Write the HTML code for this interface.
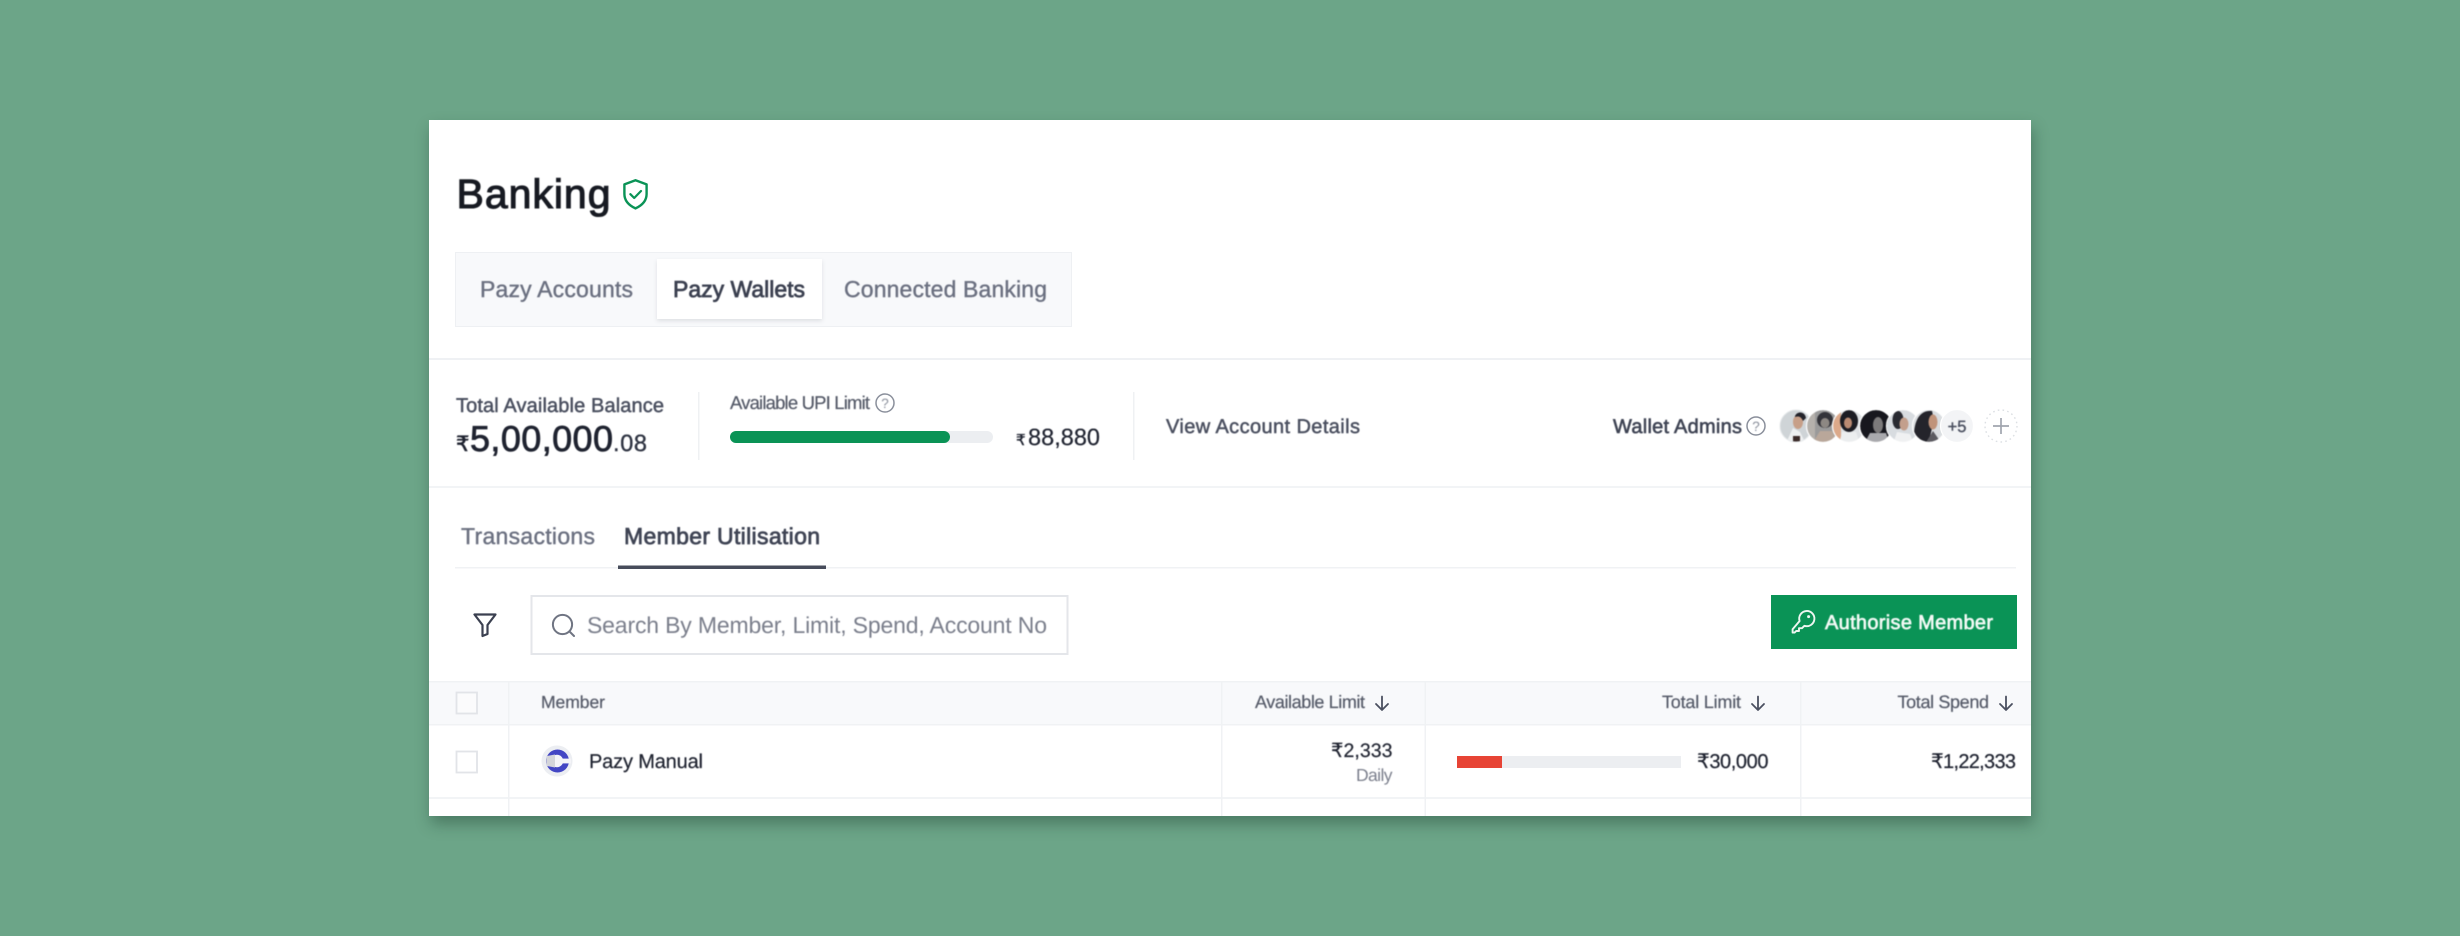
<!DOCTYPE html>
<html lang="en">
<head>
<meta charset="utf-8">
<title>Banking</title>
<style>
html,body{margin:0;padding:0;width:2460px;height:936px;overflow:hidden;background:#6ca588}
.card{position:absolute;left:429px;top:120px;width:1602px;height:696px;background:#fff;box-shadow:2px 8px 14px rgba(20,50,35,.36)}
svg.o{position:absolute;left:0;top:0;display:block}
text{font-family:"Liberation Sans","DejaVu Sans",sans-serif;text-rendering:geometricPrecision}
.m{stroke-width:.4px}
.l{stroke-width:.22px}
.txt{filter:blur(.4px)}
.av{filter:blur(.6px)}
</style>
</head>
<body>
<div class="card"></div>
<svg class="o" width="2460" height="936" viewBox="0 0 2460 936" xmlns="http://www.w3.org/2000/svg">
  <defs>
    <clipPath id="a1"><circle cx="1796" cy="426" r="16"/></clipPath>
    <clipPath id="a2"><circle cx="1823" cy="426" r="16"/></clipPath>
    <clipPath id="a3"><circle cx="1849" cy="426" r="16"/></clipPath>
    <clipPath id="a4"><circle cx="1876" cy="426" r="16"/></clipPath>
    <clipPath id="a5"><circle cx="1903" cy="426" r="16"/></clipPath>
    <clipPath id="a6"><circle cx="1929" cy="426" r="16"/></clipPath>
  </defs>

  <!-- page tabs -->
  <rect x="455.5" y="252.5" width="616" height="74" fill="#f8f9fb" stroke="#eef0f3"/>
  <rect x="657" y="259" width="165" height="60" fill="#fff" style="filter:drop-shadow(0 2px 2px rgba(30,40,60,.12))"/>

  <!-- section lines -->
  <rect x="429" y="358" width="1602" height="2" fill="#eff1f4"/>
  <rect x="429" y="486" width="1602" height="2" fill="#f2f4f6"/>
  <rect x="698" y="392" width="1.5" height="68" fill="#eff1f3"/>
  <rect x="1133" y="392" width="1.5" height="68" fill="#eff1f3"/>

  <!-- UPI bar -->
  <rect x="730" y="431" width="263" height="12" rx="6" fill="#eceef1"/>
  <rect x="730" y="431" width="220" height="12" rx="6" fill="#0a9356"/>

  <!-- sub tabs -->
  <rect x="455" y="567" width="1561" height="1.5" fill="#f0f2f4"/>
  <rect x="618" y="565.5" width="208" height="3.5" fill="#474c5b"/>

  <!-- search -->
  <rect x="531.5" y="596" width="536" height="58" fill="#fff" stroke="#e4e6ea" stroke-width="2"/>
  <circle cx="562.5" cy="624.5" r="9.6" fill="none" stroke="#6f7482" stroke-width="2"/>
  <path d="M569.5 631.5L574 636" fill="none" stroke="#6f7482" stroke-width="2" stroke-linecap="round"/>

  <!-- filter -->
  <path d="M474.5 614.5H495.5L487.5 625V634L482.5 636V625Z" fill="none" stroke="#3b4050" stroke-width="2.2" stroke-linejoin="round"/>

  <!-- button -->
  <rect x="1771" y="595" width="246" height="54" fill="#0a9356"/>
  <path d="M1799.6 621A7.6 7.6 0 1 1 1804.4 625.8L1802 628.2H1799V631H1796.2L1794.6 632.6H1792.6V629.2Z" fill="none" stroke="#eef6f1" stroke-width="1.9" stroke-linejoin="round"/>
  <circle cx="1808.6" cy="616.6" r="1.5" fill="#eef6f1"/>

  <!-- table -->
  <rect x="429" y="682" width="1602" height="43" fill="#f8f9fb"/>
  <rect x="429" y="681" width="1602" height="1.5" fill="#f0f2f4"/>
  <rect x="429" y="724" width="1602" height="1.5" fill="#f0f2f4"/>
  <rect x="429" y="797" width="1602" height="2" fill="#f2f4f6"/>
  <g fill="#f0f2f4">
    <rect x="508" y="682" width="1.5" height="134"/>
    <rect x="1221" y="682" width="1.5" height="134"/>
    <rect x="1424.5" y="682" width="1.5" height="134"/>
    <rect x="1800" y="682" width="1.5" height="134"/>
  </g>
  <rect x="456.5" y="692.5" width="20.5" height="21" fill="#fff" fill-opacity=".4" stroke="#e2e4e8" stroke-width="1.8"/>
  <rect x="456.5" y="751.5" width="20.5" height="21" fill="#fff" stroke="#e2e4e8" stroke-width="1.8"/>

  <!-- sort arrows -->
  <g fill="none" stroke="#4b5060" stroke-width="1.8" stroke-linecap="round" stroke-linejoin="round">
    <path d="M1382 696.5V710M1376 704L1382 710L1388 704"/>
    <path d="M1758 696.5V710M1752 704L1758 710L1764 704"/>
    <path d="M2006 696.5V710M2000 704L2006 710L2012 704"/>
  </g>

  <!-- limit bar -->
  <rect x="1457" y="756" width="224" height="12" fill="#eceef1"/>
  <rect x="1457" y="756" width="45" height="12" fill="#e74435"/>

  <!-- shield -->
  <path d="M635.5 180.2L646.6 184.4V194C646.6 200.8 642 205.4 635.5 208.4C629 205.4 624.4 200.8 624.4 194V184.4Z" fill="none" stroke="#0a9356" stroke-width="2.4" stroke-linejoin="round"/>
  <path d="M630.4 194.2L634.2 198L641 191" fill="none" stroke="#0a9356" stroke-width="2.2" stroke-linecap="round" stroke-linejoin="round"/>

  <!-- help icons -->
  <circle cx="885" cy="403" r="9" fill="none" stroke="#8a8f9b" stroke-width="1.5"/>
  <circle cx="1756" cy="426" r="9" fill="none" stroke="#8a8f9b" stroke-width="1.5"/>

  <!-- logo -->
  <g style="filter:blur(.35px)">
    <circle cx="557" cy="761" r="15.5" fill="#eceef2"/>
    <circle cx="557.5" cy="761" r="11.5" fill="#4346c4"/>
    <circle cx="557" cy="761" r="6.2" fill="#f4f4f8"/>
    <rect x="560" y="758.6" width="11" height="4.8" fill="#f4f4f8"/>
    <path d="M547 756C546 759 546 763 547 766L555 767.5V754.5Z" fill="#d4d5da"/>
  </g>

  <!-- avatars -->
  <g class="av">
  <g clip-path="url(#a1)">
    <rect x="1778" y="408" width="36" height="36" fill="#cfd4d7"/>
    <ellipse cx="1798" cy="422" rx="5" ry="7" fill="#c79f88"/>
    <path d="M1795 416C1797 411 1805 411 1806 418L1803 421C1801 416 1798 416 1795 417Z" fill="#23232b"/>
    <path d="M1786 443L1793 428L1800 432L1806 444Z" fill="#eef0f1"/>
    <rect x="1793" y="436" width="7" height="6" fill="#3a2a28"/>
  </g>
  <circle cx="1796" cy="426" r="16" fill="none" stroke="#e5e8ea" stroke-width="1"/>
  <g clip-path="url(#a2)">
    <rect x="1805" y="408" width="36" height="36" fill="#9a9a9a"/>
    <rect x="1805" y="408" width="10" height="36" fill="#b5b1ac"/>
    <ellipse cx="1825" cy="420" rx="8" ry="8" fill="#34343a"/>
    <ellipse cx="1825" cy="423" rx="4.5" ry="5" fill="#8d8883"/>
    <path d="M1812 444L1820 431L1832 431L1838 444Z" fill="#b9a79a"/>
  </g>
  <circle cx="1823" cy="426" r="16.5" fill="none" stroke="#fff" stroke-width="1.2"/>
  <g clip-path="url(#a3)">
    <rect x="1831" y="408" width="36" height="36" fill="#dfe2e5"/>
    <rect x="1831" y="408" width="10" height="36" fill="#dca98a"/>
    <ellipse cx="1849" cy="421" rx="9" ry="11" fill="#1d1d24"/>
    <ellipse cx="1848" cy="423" rx="4" ry="5.5" fill="#b98a72"/>
    <path d="M1839 444L1842 432L1856 432L1860 444Z" fill="#eceeef"/>
  </g>
  <circle cx="1849" cy="426" r="16.5" fill="none" stroke="#fff" stroke-width="1.2"/>
  <g clip-path="url(#a4)">
    <rect x="1858" y="408" width="36" height="36" fill="#17171e"/>
    <ellipse cx="1878" cy="425" rx="5" ry="8" fill="#7c7a7b"/>
    <path d="M1864 444L1870 433L1886 433L1890 444Z" fill="#a9a9ad"/>
  </g>
  <circle cx="1876" cy="426" r="16.5" fill="none" stroke="#fff" stroke-width="1.2"/>
  <g clip-path="url(#a5)">
    <rect x="1885" y="408" width="36" height="36" fill="#d8dce0"/>
    <ellipse cx="1898" cy="420" rx="5.5" ry="9" fill="#292a31"/>
    <ellipse cx="1904" cy="424" rx="4.5" ry="6.5" fill="#c39f8c"/>
    <path d="M1893 444L1897 432L1910 434L1914 444Z" fill="#f0f1f2"/>
  </g>
  <circle cx="1903" cy="426" r="16.5" fill="none" stroke="#fff" stroke-width="1.2"/>
  <g clip-path="url(#a6)">
    <rect x="1911" y="408" width="36" height="36" fill="#dadde0"/>
    <path d="M1914 442C1913 420 1920 410 1932 411C1935 422 1930 436 1928 444Z" fill="#24242b"/>
    <ellipse cx="1933" cy="422" rx="4.5" ry="7.5" fill="#c0937a"/>
    <path d="M1925 444L1933 431L1942 444Z" fill="#5b5a60"/>
  </g>
  <circle cx="1929" cy="426" r="16.5" fill="none" stroke="#fff" stroke-width="1.2"/>
  </g>

  <circle cx="1957" cy="426" r="16.5" fill="#f3f4f6" stroke="#fff" stroke-width="1.2"/>
  <circle cx="2001" cy="426" r="16" fill="#fff" stroke="#dcdfe3" stroke-width="1.4" stroke-dasharray="1.6 3.2"/>
  <path d="M2001 418V434M1993 426H2009" stroke="#a0a5ae" stroke-width="1.7" fill="none"/>

  <!-- all text -->
  <g class="txt">
    <text x="456.5" y="208" font-size="41" textLength="154" fill="#171a22" stroke="#171a22" style="stroke-width:1.1px">Banking</text>

    <text x="480" y="297" font-size="23" textLength="153" fill="#6b7080" stroke="#6b7080" class="m">Pazy Accounts</text>
    <text x="673" y="297" font-size="23" textLength="132" fill="#3b4050" stroke="#3b4050" style="stroke-width:.75px">Pazy Wallets</text>
    <text x="844" y="297" font-size="23" textLength="203" fill="#6b7080" stroke="#6b7080" class="m">Connected Banking</text>

    <text x="456" y="412" font-size="20" textLength="208" fill="#4b5060" stroke="#4b5060" class="m" style="stroke-width:.5px">Total Available Balance</text>
    <text x="456" y="451" font-size="21" textLength="12" fill="#1f2330" stroke="#1f2330" style="stroke-width:.6px">₹</text>
    <text x="470" y="451" font-size="36" textLength="143" fill="#1f2330" stroke="#1f2330" style="stroke-width:.8px">5,00,000</text>
    <text x="613" y="451" font-size="23.5" textLength="34" fill="#2f3442" stroke="#2f3442" class="m">.08</text>

    <text x="730" y="409" font-size="18.5" textLength="140" fill="#555a68" stroke="#555a68" class="l">Available UPI Limit</text>
    <text x="885" y="408" font-size="13.5" text-anchor="middle" fill="#8a8f9b">?</text>
    <text x="1016" y="445" font-size="15" textLength="9" fill="#1f2330" stroke="#1f2330" class="m">₹</text>
    <text x="1028" y="445" font-size="23.5" textLength="72" fill="#1f2330" stroke="#1f2330" class="l">88,880</text>

    <text x="1166" y="433" font-size="20" textLength="194" fill="#4b5060" stroke="#4b5060" class="m" style="stroke-width:.5px">View Account Details</text>

    <text x="1613" y="433" font-size="20" textLength="129" fill="#3f4454" stroke="#3f4454" class="m" style="stroke-width:.6px">Wallet Admins</text>
    <text x="1756" y="431" font-size="13.5" text-anchor="middle" fill="#8a8f9b">?</text>
    <text x="1957" y="432" font-size="16.5" text-anchor="middle" fill="#4b5060" stroke="#4b5060" class="m">+5</text>

    <text x="461" y="544" font-size="23" textLength="134" fill="#6b7080" stroke="#6b7080" class="m">Transactions</text>
    <text x="624" y="544" font-size="23" textLength="196" fill="#3f4454" stroke="#3f4454" style="stroke-width:.75px">Member Utilisation</text>

    <text x="587" y="633" font-size="23" textLength="460" fill="#7b7f8c">Search By Member, Limit, Spend, Account No</text>

    <text x="1825" y="629" font-size="20" textLength="168" fill="#f4faf6" stroke="#f4faf6" style="stroke-width:.65px">Authorise Member</text>

    <text x="541" y="708" font-size="17.5" textLength="64" fill="#555a68" stroke="#555a68" class="l">Member</text>
    <text x="1255" y="708" font-size="18" textLength="110" fill="#555a68" stroke="#555a68" class="l">Available Limit</text>
    <text x="1662" y="708" font-size="18" textLength="79" fill="#555a68" stroke="#555a68" class="l">Total Limit</text>
    <text x="1897.5" y="708" font-size="18" textLength="91.5" fill="#555a68" stroke="#555a68" class="l">Total Spend</text>

    <text x="589" y="768" font-size="20" textLength="114" fill="#1f2330" stroke="#1f2330" class="l">Pazy Manual</text>
    <text x="1331" y="757" font-size="19.5" textLength="61.5" fill="#1f2330" stroke="#1f2330" class="l">₹2,333</text>
    <text x="1356" y="781" font-size="17.5" textLength="36.5" fill="#7b7f8c">Daily</text>
    <text x="1697" y="768" font-size="20" textLength="71.5" fill="#1f2330" stroke="#1f2330" class="l">₹30,000</text>
    <text x="1931" y="768" font-size="20" textLength="85" fill="#1f2330" stroke="#1f2330" class="l">₹1,22,333</text>
  </g>
</svg>
</body>
</html>
